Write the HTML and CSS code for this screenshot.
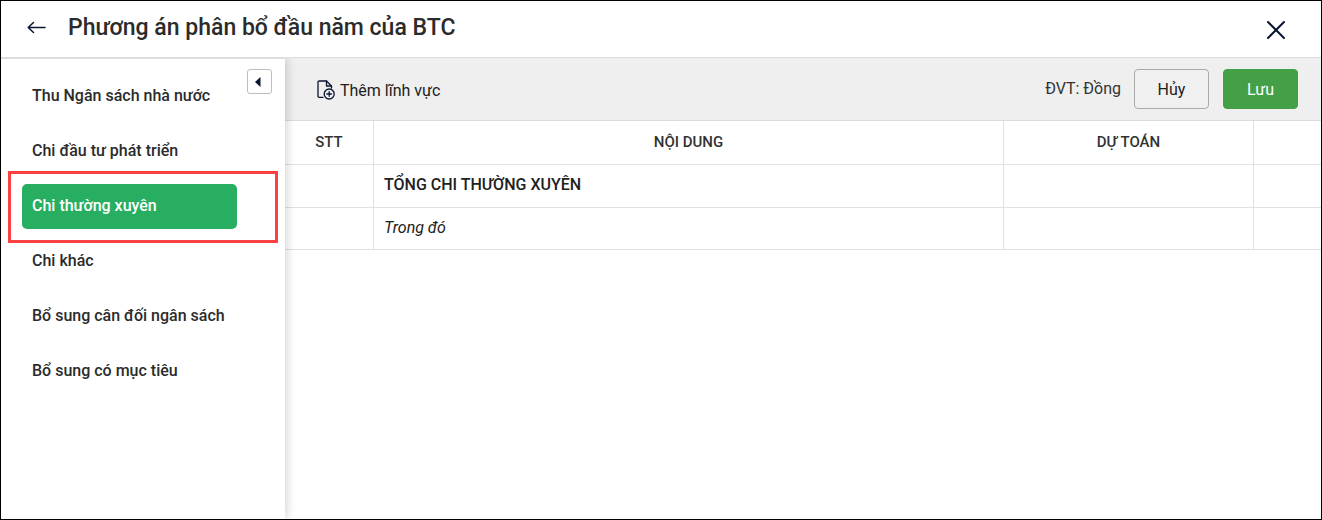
FILE: index.html
```
<!DOCTYPE html>
<html lang="vi">
<head>
  <meta charset="UTF-8" />
  <meta name="viewport" content="width=device-width, initial-scale=1" />
  <title>Phương án phân bổ đầu năm của BTC</title>
  <link rel="stylesheet" href="styles.css">
</head>
<body>

  <header class="page-header">
    <button type="button" class="icon-button" aria-label="Quay lại">
      <svg width="20" height="14" viewBox="0 0 20 14" fill="none" stroke="#0b1533" stroke-width="1.500" stroke-linecap="round" stroke-linejoin="round">
        <path d="M18 6.500H1.500M6.500 1.500L1.200 6.500l5.300 5" />
      </svg>
    </button>
    <h1>Phương án phân bổ đầu năm của BTC</h1>
    <button type="button" class="icon-button" aria-label="Đóng">
      <svg width="20" height="20" viewBox="0 0 20 20" fill="none" stroke="#0b1533" stroke-width="2" stroke-linecap="round">
        <path d="M2 2l16 16M18 2L2 18" />
      </svg>
    </button>
  </header>

  <div class="layout">

    <nav class="sidebar">
      <button type="button" class="collapse-button" aria-label="Thu gọn">
        <svg width="6" height="10" viewBox="0 0 6 10"><path d="M5.500 0v10L0 5z" fill="#0b1533" /></svg>
      </button>
      <ul>
        <li><a href="#">Thu Ngân sách nhà nước</a></li>
        <li><a href="#">Chi đầu tư phát triển</a></li>
        <li class="active"><a href="#">Chi thường xuyên</a></li>
        <li><a href="#">Chi khác</a></li>
        <li><a href="#">Bổ sung cân đối ngân sách</a></li>
        <li><a href="#">Bổ sung có mục tiêu</a></li>
      </ul>
    </nav>

    <main>
      <div class="toolbar">
        <button type="button" class="add-button">
          <svg width="18" height="20" viewBox="0 0 18 20" fill="none" stroke="#0b1533" stroke-width="1.300" stroke-linejoin="round" stroke-linecap="round">
            <path d="M6 17.300H2.200Q1 17.300 1 16.100V2.200Q1 1 2.200 1H9.500L14.500 6V8" />
            <path d="M9.500 1V6H14.500" />
            <circle cx="12.200" cy="14" r="5" />
            <path d="M12.200 11.700v4.600M9.900 14h4.600" />
          </svg>
          Thêm lĩnh vực
        </button>
        <div class="actions">
          <span class="unit">ĐVT: Đồng</span>
          <button type="button" class="btn">Hủy</button>
          <button type="button" class="btn btn-save">Lưu</button>
        </div>
      </div>

      <table>
        <colgroup>
          <col class="col-stt">
          <col class="col-content">
          <col class="col-estimate">
          <col>
        </colgroup>
        <thead>
          <tr>
            <th>STT</th>
            <th>NỘI DUNG</th>
            <th>DỰ TOÁN</th>
            <th></th>
          </tr>
        </thead>
        <tbody>
          <tr class="total">
            <td></td>
            <td>TỔNG CHI THƯỜNG XUYÊN</td>
            <td></td>
            <td></td>
          </tr>
          <tr class="note">
            <td></td>
            <td>Trong đó</td>
            <td></td>
            <td></td>
          </tr>
        </tbody>
      </table>
    </main>

  </div>

</body>
</html>
```
FILE: styles.css
```
* {
  box-sizing: border-box;
}

body {
  margin: 0;
  min-height: 100vh;
  display: flex;
  flex-direction: column;
  border: 1px solid #000;
  font-family: Roboto, sans-serif;
  font-size: 16px;
  color: #212121;
  background-color: white;
}

button {
  font: inherit;
  color: inherit;
  cursor: pointer;
}

svg {
  display: block;
}

.page-header {
  display: flex;
  align-items: center;
  height: 57px;
  padding: 0 31px 2px 22px;
  border-bottom: 1px solid #dcdcdc;
}

.page-header h1 {
  flex: 1;
  margin: 0 0 0 17px;
  font-size: 23px;
  font-weight: 500;
  line-height: 28px;
  color: #2b2b2b;
}

.icon-button {
  padding: 4px;
  border: none;
  background: none;
}

.page-header .icon-button:last-child {
  margin-top: 4px;
}

.layout {
  flex: 1;
  display: flex;
}

.sidebar {
  position: relative;
  z-index: 1;
  flex: none;
  width: 284px;
  padding: 15px 48px 15px 21px;
  border-top: 1px solid #dcdcdc;
  background-color: white;
  box-shadow: 1px 0 10px rgba(0, 0, 0, 0.2);
  clip-path: inset(0 -16px 0 0);
}

.sidebar ul {
  display: flex;
  flex-direction: column;
  gap: 10px;
  margin: 0;
  padding: 0;
  list-style: none;
}

.sidebar li {
  position: relative;
}

.sidebar a {
  display: block;
  padding: 0 10px 2px;
  border-radius: 5px;
  font-weight: 500;
  line-height: 43px;
  color: #2b2b2b;
  text-decoration: none;
}

.sidebar .active a {
  color: white;
  background-color: #27ae60;
}

/* Red frame around the current section */
.sidebar .active::after {
  content: "";
  position: absolute;
  inset: -13px -41px -14px -14px;
  border: 3px solid #fb4141;
  pointer-events: none;
}

.collapse-button {
  position: absolute;
  top: 10px;
  right: 13px;
  display: flex;
  align-items: center;
  justify-content: center;
  width: 25px;
  height: 25px;
  padding: 0 3px 0 0;
  border: 1px solid #bdbdbd;
  border-radius: 3px;
  background-color: white;
}

main {
  flex: 1;
  min-width: 0;
}

.toolbar {
  display: flex;
  align-items: center;
  justify-content: space-between;
  height: 63px;
  padding: 0 23px 0 32px;
  border-bottom: 1px solid #dcdcdc;
  background-color: #efefef;
}

.add-button {
  display: flex;
  align-items: center;
  gap: 5px;
  padding: 2px 0 0;
  border: none;
  background: none;
}

.actions {
  display: flex;
  align-items: center;
}

.unit {
  margin-right: 13px;
  padding-bottom: 2px;
  color: #333;
}

.btn {
  width: 75px;
  height: 40px;
  padding: 0;
  border: 1px solid #aaa;
  border-radius: 4px;
  background-color: #f0f0f0;
}

.btn-save {
  margin-left: 14px;
  border-color: #43a047;
  color: white;
  background-color: #43a047;
}

table {
  width: 100%;
  table-layout: fixed;
  border-collapse: separate;
  border-spacing: 0;
}

.col-stt {
  width: 89px;
}

.col-content {
  width: 630px;
}

.col-estimate {
  width: 250px;
}

th,
td {
  height: 43px;
  padding: 0 10px 3px;
  border-right: 1px solid #dfe1e3;
  border-bottom: 1px solid #dfe1e3;
  text-align: left;
}

th {
  height: 44px;
  padding-bottom: 2px;
  font-size: 15px;
  font-weight: 500;
  text-align: center;
  color: #333;
}

th:last-child,
td:last-child {
  border-right: none;
}

.total {
  font-weight: 500;
}

.note {
  font-style: italic;
}

.note td {
  height: 42px;
}
```
